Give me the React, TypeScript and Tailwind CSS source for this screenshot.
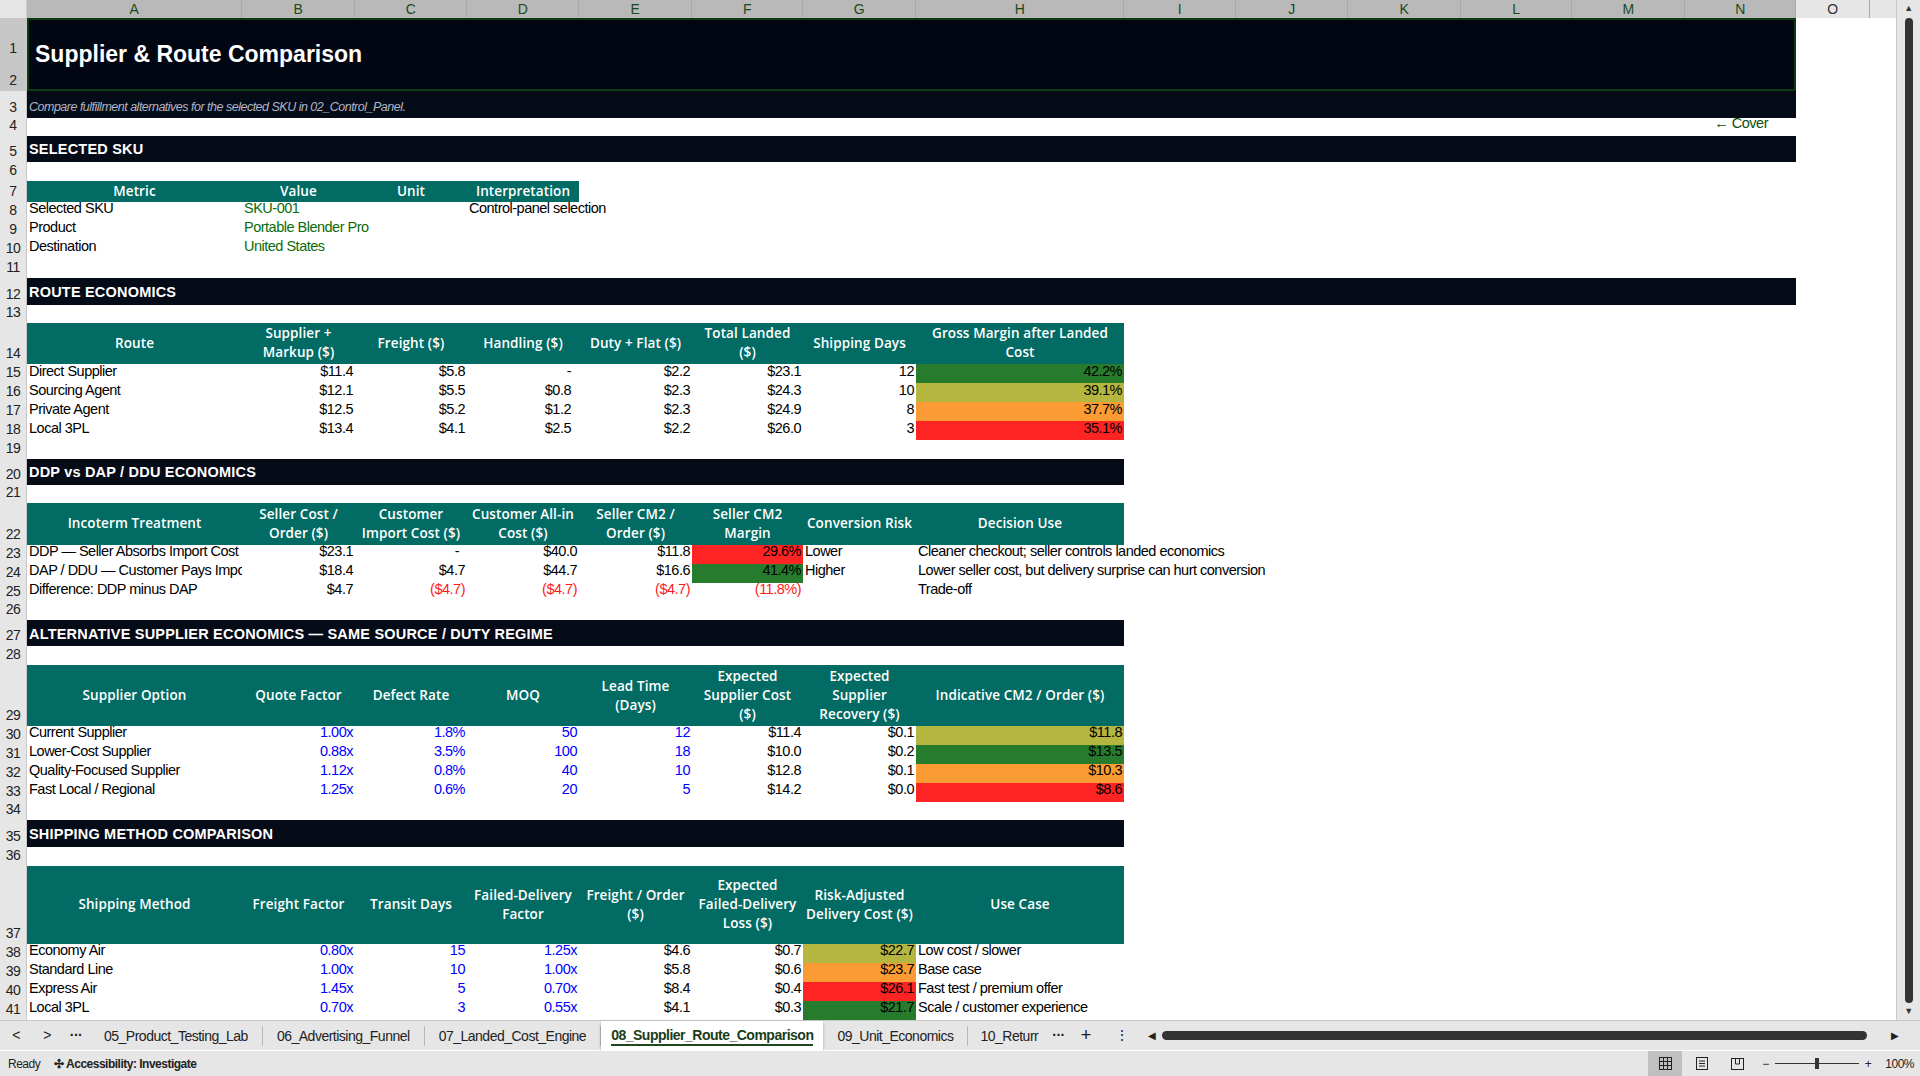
import React from "react";

const W = [215, 113, 112, 112, 113, 111, 113, 208, 112, 112, 113, 111, 113, 111, 74];
const LETTERS = "ABCDEFGHIJKLMNO".split("");

type C = { t?: React.ReactNode; s?: number; c?: string; r?: boolean; clip?: boolean; h?: boolean };

const GREEN = "bg-[#267c2c]";
const OLIVE = "bg-[#b4b640]";
const ORANGE = "bg-[#fb9b33]";
const RED = "bg-[#fe2424]";

function Row({ h, n, cells, sel = false }: { h: number; n: number; cells: C[]; sel?: boolean }) {
  let used = 0;
  const out: React.ReactNode[] = [];
  cells.forEach((c, i) => {
    const s = c.s ?? 1;
    const w = W.slice(used, used + s).reduce((a, b) => a + b, 0);
    used += s;
    const base = c.h
      ? "flex items-center justify-center text-center px-[3px] bg-[#026b64] text-white font-semibold text-[13.5px] leading-[19px] font-[Open_Sans,sans-serif] tracking-[0.1px]"
      : `flex items-end px-[2px] pb-[1px] whitespace-nowrap ${c.clip ? "overflow-hidden" : "overflow-visible"} ${c.r ? "justify-end" : ""}`;
    out.push(
      <div key={i} style={{ width: w, minWidth: w }} className={`${base} ${c.c ?? ""}`}>
        {c.t}
      </div>
    );
  });
  while (used < W.length) {
    const w = W[used];
    out.push(<div key={"e" + used} style={{ width: w, minWidth: w }} />);
    used++;
  }
  return (
    <div className="flex" style={{ height: h }}>
      <div className={`w-[27px] min-w-[27px] flex items-end justify-center text-[14px] text-[#222] border-r border-[#c8c8c8] ${sel ? "bg-[#c6c6c6]" : "bg-[#e6e6e6]"}`}>{n}</div>
      {out}
    </div>
  );
}

const hc = (t: React.ReactNode): C => ({ t, h: true });
const Bar = ({ h, n, t, span }: { h: number; n: number; t: string; span: number }) => (
  <Row h={h} n={n} cells={[{ t, s: span, c: "bg-[#060b18] text-white font-bold text-[14.5px] items-center pb-0 tracking-[0.2px]" }]} />
);
const E = (h: number, n: number) => <Row h={h} n={n} cells={[]} />;

const BL = "text-[#0000ff]";
const RD = "text-[#ff1a1a]";
const GT = "text-[#0b6b0b]";

export default function App() {
  return (
    <div className="w-[1920px] h-[1076px] flex flex-col bg-white overflow-hidden font-[Liberation_Sans,Arial,sans-serif] text-[14.5px] text-black tracking-[-0.5px]">
      <div className="flex flex-1 min-h-0">
        <div className="flex-1 flex flex-col overflow-hidden">
          <div className="flex h-[18px] min-h-[18px] text-[14px] text-[#333]">
            <div className="w-[27px] min-w-[27px] bg-[#e6e6e6] border-r border-[#c8c8c8]" />
            {W.map((w, i) => (
              <div key={i} style={{ width: w, minWidth: w }} className={`flex items-center justify-center border-r border-[#a8a8a8] ${i < 14 ? "bg-[#b9b9b9] text-[#1c4a1c]" : "bg-[#e6e6e6]"}`}>{LETTERS[i]}</div>
            ))}
            <div className="flex-1 bg-[#e6e6e6]" />
          </div>
          <div className="flex h-[74px]">
            <div className="w-[27px] min-w-[27px] bg-[#c6c6c6] border-r border-[#c8c8c8] flex flex-col justify-between items-center text-[14px] text-[#222]">
              <span className="mt-[20px]">1</span>
              <span>2</span>
            </div>
            <div className="w-[1769px] bg-[#020612] border-2 border-[#0d3b12] flex items-center pl-[6px] text-white text-[23px] font-bold tracking-normal">
              Supplier &amp; Route Comparison
            </div>
          </div>
          <Row h={27} n={3} cells={[{ t: "Compare fulfillment alternatives for the selected SKU in 02_Control_Panel.", s: 14, c: "bg-[#060b18] text-[#b0b6c8] italic text-[12.5px] items-center pb-0" }]} />
          <Row h={18} n={4} cells={[{ s: 13 }, { t: "← Cover", c: "text-[#0b4d0b] pr-[28px]", r: true }]} />
          <Bar h={26} n={5} t="SELECTED SKU" span={14} />
          {E(19, 6)}
          <Row h={21} n={7} cells={[hc("Metric"), hc("Value"), hc("Unit"), hc("Interpretation")]} />
          <Row h={19} n={8} cells={[{ t: "Selected SKU" }, { t: "SKU-001", c: GT }, {}, { t: "Control-panel selection" }]} />
          <Row h={19} n={9} cells={[{ t: "Product" }, { t: "Portable Blender Pro", c: GT }]} />
          <Row h={19} n={10} cells={[{ t: "Destination" }, { t: "United States", c: GT }]} />
          {E(19, 11)}
          <Bar h={27} n={12} t="ROUTE ECONOMICS" span={14} />
          {E(18, 13)}
          <Row h={42} n={14} cells={[hc("Route"), hc("Supplier + Markup ($)"), hc("Freight ($)"), hc("Handling ($)"), hc("Duty + Flat ($)"), hc("Total Landed ($)"), hc("Shipping Days"), hc("Gross Margin after Landed Cost")]} />
          {[
            ["Direct Supplier", "$11.4", "$5.8", "-", "$2.2", "$23.1", "12", "42.2%", GREEN],
            ["Sourcing Agent", "$12.1", "$5.5", "$0.8", "$2.3", "$24.3", "10", "39.1%", OLIVE],
            ["Private Agent", "$12.5", "$5.2", "$1.2", "$2.3", "$24.9", "8", "37.7%", ORANGE],
            ["Local 3PL", "$13.4", "$4.1", "$2.5", "$2.2", "$26.0", "3", "35.1%", RED],
          ].map((r, i) => (
            <Row key={i} h={19} n={15 + i} cells={[{ t: r[0] }, { t: r[1], r: true }, { t: r[2], r: true }, { t: r[3], r: true, c: "pr-[8px]" }, { t: r[4], r: true }, { t: r[5], r: true }, { t: r[6], r: true }, { t: r[7], r: true, c: r[8] }]} />
          ))}
          {E(19, 19)}
          <Bar h={26} n={20} t="DDP vs DAP / DDU ECONOMICS" span={8} />
          {E(18, 21)}
          <Row h={42} n={22} cells={[hc("Incoterm Treatment"), hc("Seller Cost / Order ($)"), hc("Customer Import Cost ($)"), hc("Customer All-in Cost ($)"), hc("Seller CM2 / Order ($)"), hc("Seller CM2 Margin"), hc("Conversion Risk"), hc("Decision Use")]} />
          <Row h={19} n={23} cells={[{ t: "DDP — Seller Absorbs Import Cost", clip: true }, { t: "$23.1", r: true }, { t: "-", r: true, c: "pr-[8px]" }, { t: "$40.0", r: true }, { t: "$11.8", r: true }, { t: "29.6%", r: true, c: RED }, { t: "Lower" }, { t: "Cleaner checkout; seller controls landed economics" }]} />
          <Row h={19} n={24} cells={[{ t: "DAP / DDU — Customer Pays Import", clip: true }, { t: "$18.4", r: true }, { t: "$4.7", r: true }, { t: "$44.7", r: true }, { t: "$16.6", r: true }, { t: "41.4%", r: true, c: GREEN }, { t: "Higher" }, { t: "Lower seller cost, but delivery surprise can hurt conversion" }]} />
          <Row h={19} n={25} cells={[{ t: "Difference: DDP minus DAP" }, { t: "$4.7", r: true }, { t: "($4.7)", r: true, c: RD }, { t: "($4.7)", r: true, c: RD }, { t: "($4.7)", r: true, c: RD }, { t: "(11.8%)", r: true, c: RD }, {}, { t: "Trade-off" }]} />
          {E(18, 26)}
          <Bar h={27} n={27} t="ALTERNATIVE SUPPLIER ECONOMICS — SAME SOURCE / DUTY REGIME" span={8} />
          {E(19, 28)}
          <Row h={61} n={29} cells={[hc("Supplier Option"), hc("Quote Factor"), hc("Defect Rate"), hc("MOQ"), hc("Lead Time (Days)"), hc("Expected Supplier Cost ($)"), hc("Expected Supplier Recovery ($)"), hc("Indicative CM2 / Order ($)")]} />
          {[
            ["Current Supplier", "1.00x", "1.8%", "50", "12", "$11.4", "$0.1", "$11.8", OLIVE],
            ["Lower-Cost Supplier", "0.88x", "3.5%", "100", "18", "$10.0", "$0.2", "$13.5", GREEN],
            ["Quality-Focused Supplier", "1.12x", "0.8%", "40", "10", "$12.8", "$0.1", "$10.3", ORANGE],
            ["Fast Local / Regional", "1.25x", "0.6%", "20", "5", "$14.2", "$0.0", "$8.6", RED],
          ].map((r, i) => (
            <Row key={i} h={19} n={30 + i} cells={[{ t: r[0] }, { t: r[1], r: true, c: BL }, { t: r[2], r: true, c: BL }, { t: r[3], r: true, c: BL }, { t: r[4], r: true, c: BL }, { t: r[5], r: true }, { t: r[6], r: true }, { t: r[7], r: true, c: r[8] }]} />
          ))}
          {E(18, 34)}
          <Bar h={27} n={35} t="SHIPPING METHOD COMPARISON" span={8} />
          {E(19, 36)}
          <Row h={79} n={37} cells={[hc("Shipping Method"), hc("Freight Factor"), hc("Transit Days"), hc("Failed-Delivery Factor"), hc("Freight / Order ($)"), hc("Expected Failed-Delivery Loss ($)"), hc("Risk-Adjusted Delivery Cost ($)"), hc("Use Case")]} />
          {[
            ["Economy Air", "0.80x", "15", "1.25x", "$4.6", "$0.7", "$22.7", OLIVE, "Low cost / slower"],
            ["Standard Line", "1.00x", "10", "1.00x", "$5.8", "$0.6", "$23.7", ORANGE, "Base case"],
            ["Express Air", "1.45x", "5", "0.70x", "$8.4", "$0.4", "$26.1", RED, "Fast test / premium offer"],
            ["Local 3PL", "0.70x", "3", "0.55x", "$4.1", "$0.3", "$21.7", GREEN, "Scale / customer experience"],
          ].map((r, i) => (
            <Row key={i} h={19} n={38 + i} cells={[{ t: r[0] }, { t: r[1], r: true, c: BL }, { t: r[2], r: true, c: BL }, { t: r[3], r: true, c: BL }, { t: r[4], r: true }, { t: r[5], r: true }, { t: r[6], r: true, c: r[7] }, { t: r[8] }]} />
          ))}
        </div>
        <div className="w-[24px] bg-[#e6e6e6] flex flex-col items-center pt-[2px] pb-[2px] border-l border-[#c8c8c8]">
          <span className="text-[9px] text-[#333]">▲</span>
          <div className="w-[8px] flex-1 bg-[#333] rounded-full my-[2px]" />
          <span className="text-[9px] text-[#333]">▼</span>
        </div>
      </div>
      <div className="h-[30px] min-h-[30px] bg-[#e6e6e6] flex items-center text-[14px] text-[#222] tracking-[-0.5px] border-t border-[#c8c8c8]">
        <span className="w-[32px] text-center">&lt;</span>
        <span className="w-[30px] text-center">&gt;</span>
        <span className="w-[28px] text-center font-bold">···</span>
        {["05_Product_Testing_Lab", "06_Advertising_Funnel", "07_Landed_Cost_Engine"].map((t) => (
          <span key={t} className="px-[14px] border-r border-[#b8b8b8] leading-[20px]">{t}</span>
        ))}
        <span className="px-[10px] h-full bg-white flex items-center font-bold text-[#1a3d1a] shadow-[0_1px_3px_rgba(0,0,0,0.25)]">
          <span className="border-b-2 border-[#1e4620] leading-[18px]">08_Supplier_Route_Comparison</span>
        </span>
        <span className="px-[14px] border-r border-[#b8b8b8] leading-[20px]">09_Unit_Economics</span>
        <span className="px-[12px] leading-[20px]">10_Returr</span>
        <span className="font-bold px-[2px]">···</span>
        <span className="px-[14px] text-[18px]">+</span>
        <span className="px-[10px]">⋮</span>
        <span className="text-[10px] pl-[10px]">◀</span>
        <div className="flex-1 h-[9px] bg-[#333] rounded-full mx-[6px]" />
        <span className="text-[10px] pr-[22px] pl-[18px]">▶</span>
      </div>
      <div className="h-[26px] min-h-[26px] bg-[#e6e6e6] flex items-center text-[12px] text-[#222] border-t border-white">
        <span className="pl-[8px] pr-[14px]">Ready</span>
        <span className="font-bold">✣ Accessibility: Investigate</span>
        <div className="flex-1" />
        <div className="w-[34px] h-full bg-[#c0c0c0] flex items-center justify-center">
          <svg width="13" height="13" viewBox="0 0 13 13" fill="none" stroke="#222"><rect x="0.5" y="0.5" width="12" height="12" /><path d="M4.5 0v13M8.5 0v13M0 4.5h13M0 8.5h13" /></svg>
        </div>
        <div className="w-[40px] flex justify-center"><svg width="12" height="13" viewBox="0 0 12 13" fill="none" stroke="#222"><rect x="0.5" y="0.5" width="11" height="12" /><path d="M3 4h6M3 6.5h6M3 9h6" /></svg></div>
        <div className="w-[30px] flex justify-center"><svg width="13" height="12" viewBox="0 0 13 12" fill="none" stroke="#222"><rect x="0.5" y="0.5" width="12" height="11" /><path d="M4.5 0v6h4V0" /></svg></div>
        <span className="pl-[10px]">−</span>
        <div className="w-[84px] h-[1px] bg-[#333] mx-[6px] relative">
          <div className="absolute left-[40px] -top-[5px] w-[4px] h-[11px] bg-[#333]" />
        </div>
        <span>+</span>
        <span className="pl-[14px] pr-[6px]">100%</span>
      </div>
    </div>
  );
}
